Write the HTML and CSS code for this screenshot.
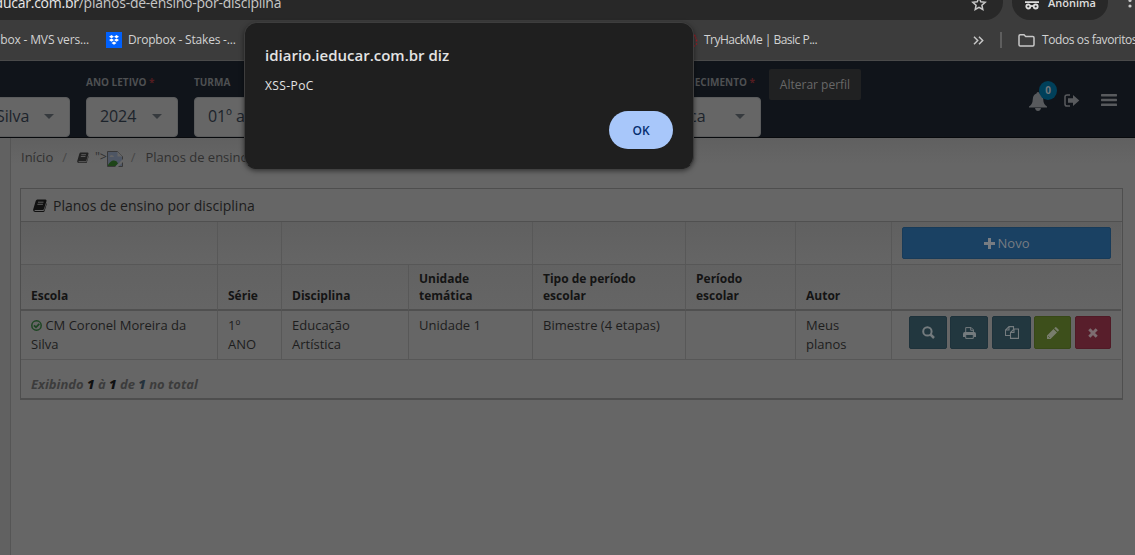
FILE: index.html
```html
<!DOCTYPE html>
<html lang="pt-BR">
<head>
<meta charset="utf-8">
<title>Planos de ensino por disciplina</title>
<link rel="stylesheet" href="styles.css">
</head>
<body>
<div class="toolbar">
  <div class="omnibox"><span class="url"><b class="host">educar.com.br</b>/planos-de-ensino-por-disciplina</span>
    <svg class="star" width="16" height="16" viewBox="0 0 16 16" fill="none" stroke="#c7c7c7" stroke-width="1.5"><path d="M8 1.700l1.800 4 4.400.5-3.300 3 .9 4.300L8 11.300l-3.800 2.200.9-4.300-3.300-3 4.400-.5z"/></svg>
  </div>
  <div class="incognito">
    <svg width="16" height="16" viewBox="0 0 16 16" fill="none" stroke="#dedede" stroke-width="1.800"><path d="M1 8.200h14M4 5V2h8v3"/><circle cx="4.300" cy="12.500" r="2"/><circle cx="11.700" cy="12.500" r="2"/><path d="M6 12h4"/></svg>
    <span>Anônima</span>
  </div>
  <svg class="dots" width="4" height="18" viewBox="0 0 4 18" fill="#c7c7c7"><circle cx="2" cy="5" r="1.600"/><circle cx="2" cy="10.500" r="1.600"/><circle cx="2" cy="16" r="1.600"/></svg>
</div>

<div class="bookmarks">
  <span class="bm bm-mvs">pbox - MVS vers...</span>
  <svg class="dropbox" width="16" height="16" viewBox="0 0 16 16"><path fill="#0061fe" d="M0 0h16v16H0z"/><path fill="#fff" d="M5.500 3L8 4.700 5.500 6.300 3 4.700zM10.500 3L13 4.700l-2.500 1.600L8 4.700zM5.500 6.500L8 8.100 5.500 9.800 3 8.100zM10.500 6.500L13 8.100l-2.500 1.700L8 8.100zM8 9.500l2.500 1.600L8 12.800l-2.500-1.700z"/></svg>
  <span class="bm bm-stakes">Dropbox - Stakes -...</span>
  <svg class="thm" width="10" height="14" viewBox="0 0 10 14" fill="none" stroke="#9c1c24" stroke-width="1.600"><path d="M1 2.500c4-2 7 0 6.500 3M8.500 6.500v2M3 10l3 1M8 10.500l1 1M4 13h4" stroke-dasharray="3 1"/></svg>
  <span class="bm bm-thm">TryHackMe | Basic P...</span>
  <svg class="more" width="11" height="9" viewBox="0 0 11 9" fill="none" stroke="#c7c7c7" stroke-width="1.500"><path d="M1 .8l3.700 3.700L1 8.200M6 .8l3.700 3.700L6 8.200"/></svg>
  <i class="sep"></i>
  <svg class="folder" width="17" height="13" viewBox="0 0 17 13" fill="none" stroke="#c7c7c7" stroke-width="1.500"><path d="M1 2q0-1.200 1.200-1.200H6l1.700 1.700h7.100q1.200 0 1.200 1.200v7q0 1.200-1.200 1.200H2.200Q1 11.900 1 10.700z"/></svg>
  <span class="bm bm-all">Todos os favoritos</span>
</div>

<header class="navbar">
  <div class="field f-escola"><label>&nbsp;</label><div class="select"><span>Silva</span><i class="caret"></i></div></div>
  <div class="field f-ano"><label>ANO LETIVO <em>*</em></label><div class="select"><span>2024</span><i class="caret"></i></div></div>
  <div class="field f-turma"><label>TURMA</label><div class="select"><span>01º ano</span><i class="caret"></i></div></div>
  <div class="field f-area"><label>CONHECIMENTO <em>*</em></label><div class="select"><span>Artística</span><i class="caret"></i></div></div>
  <button class="profile">Alterar perfil</button>
  <div class="tools">
    <div class="bell">
      <svg width="18" height="19" viewBox="0 0 18 19" fill="#585a5d"><path d="M9 0q1.500 0 1.500 1.600Q14 2.700 14.200 7q.2 5.500 3.800 7.500v1H0v-1Q3.600 12.500 3.800 7 4 2.700 7.500 1.600 7.500 0 9 0zM6 16h6q-.5 3-3 3t-3-3z"/></svg>
      <span class="badge">0</span>
    </div>
    <svg class="logout" width="16" height="13" viewBox="0 0 16 13"><path fill="none" stroke="#585a5d" stroke-width="1.500" d="M6 .9H3.200Q1 .9 1 3v7q0 2.100 2.200 2.100H6"/><path fill="#585a5d" d="M4 4.300h5V1l6.300 5.500L9 12V8.700H4z"/></svg>
    <svg class="menu" width="16" height="12" viewBox="0 0 16 12" fill="#585a5d"><rect width="16" height="2.400" rx=".6"/><rect y="4.800" width="16" height="2.400" rx=".6"/><rect y="9.600" width="16" height="2.400" rx=".6"/></svg>
  </div>
</header>

<main class="page">
  <nav class="crumbs">
    <span>Início</span><span class="slash">/</span>
    <svg class="book" width="12" height="11" viewBox="0 0 14 13"><path fill="#222" d="M4.300.5h8.200q1.300.2 1 1.500L11 10q-.3 1-1.400 1H2.300q-.8 0-.8.500t.8.600H10q.9 0 1.200-.8L13.600 4q.4.300.2 1L11.600 12q-.3 1-1.400 1H2Q0 12.800.1 10.800L2.700 2Q3.200.5 4.300.5z"/><path stroke="#666" d="M5 3.200h5.500M4.400 5.300h5.500"/></svg>
    <span class="inject">"&gt;</span>
    <svg class="broken" width="16" height="16" viewBox="0 0 16 16"><path fill="#4e5664" stroke="#383838" d="M.5.500h10l5 5v10H.5z"/><path fill="#646464" d="M10.500.500v5h5zM2.500 6q.3-2 2.300-2 2.200.3 2.200 2z"/><path fill="#1e4418" d="M1 14q3-5 6-4.500 3 .2 4 3L8.500 15H1z"/><path fill="#666" d="M16 8v3l-5 5H8z"/></svg>
    <span class="slash s2">/</span><span>Planos de ensino por disciplina</span>
  </nav>

  <section class="card">
    <h1><svg width="14" height="13" viewBox="0 0 14 13"><path fill="#111" d="M4.300.5h8.200q1.300.2 1 1.500L11 10q-.3 1-1.400 1H2.300q-.8 0-.8.500t.8.600H10q.9 0 1.200-.8L13.600 4q.4.300.2 1L11.600 12q-.3 1-1.400 1H2Q0 12.800.1 10.800L2.700 2Q3.200.5 4.300.5z"/><path stroke="#666" stroke-width=".9" d="M5 3.200h5.500M4.400 5.300h5.500"/></svg>Planos de ensino por disciplina</h1>
    <table>
      <colgroup><col class="c1"><col class="c2"><col class="c3"><col class="c4"><col class="c5"><col class="c6"><col class="c7"><col class="c8"></colgroup>
      <thead>
        <tr class="filters"><th></th><th></th><th colspan="2"></th><th></th><th></th><th></th>
          <th><button class="novo"><svg width="11" height="11" viewBox="0 0 11 11" fill="#777c82"><path d="M4 0h3v4h4v3H7v4H4V7H0V4h4z"/></svg>Novo</button></th></tr>
        <tr class="heads"><th>Escola</th><th>Série</th><th>Disciplina</th><th>Unidade temática</th><th>Tipo de período escolar</th><th>Período escolar</th><th>Autor</th><th></th></tr>
      </thead>
      <tbody>
        <tr>
          <td><svg class="ok" width="11" height="11" viewBox="0 0 11 11" fill="none" stroke="#1d4522" stroke-width="1.500"><circle cx="5.500" cy="5.500" r="4.700"/><path stroke-width="1.800" d="M3 5.300l2 2 3.300-3.400"/></svg> CM Coronel Moreira da Silva</td>
          <td>1º ANO</td><td>Educação Artística</td><td>Unidade 1</td><td>Bimestre (4 etapas)</td><td></td><td>Meus planos</td>
          <td class="actions"><div>
            <button class="b-view"><svg width="13" height="13" viewBox="0 0 13 13" fill="none" stroke="#747b7e" stroke-width="2"><circle cx="5.400" cy="5.400" r="4.200"/><path stroke-width="2.500" d="M8.500 8.500l3.500 3.500"/></svg></button>
            <button class="b-print"><svg width="13" height="12" viewBox="0 0 13 12"><path fill="#747b7e" d="M0 7q0-2 1.700-2h9.600Q13 5 13 7v3h-2.500V8h-8v2H0z"/><path fill="none" stroke="#747b7e" d="M2.700 5V.6h5.500l2.200 2.200V5M7.700.6v2.700h2.700M2.700 8v3.400h7.600V8"/></svg></button>
            <button class="b-copy"><svg width="14" height="13" viewBox="0 0 14 13" fill="none" stroke="#747b7e" stroke-width="1.100"><path d="M5.500 9.500h-5V4L4 .6h4.500V3M4 .6V4H.5M5.500 6.500L9 3h4.500v9.400h-8zM9 3v3.500H5.500"/></svg></button>
            <button class="b-edit"><svg width="12" height="12" viewBox="0 0 12 12"><path fill="#787d6c" d="M0 12V8.500L6.500 2 10 5.500 3.500 12zM7.200 1.300L8 .5q.7-.8 1.500 0l2 2q.8.8 0 1.500l-.8.800z"/><path stroke="#3b4c1c" stroke-width=".8" d="M1.300 9.300l1.400 1.400"/></svg></button>
            <button class="b-del"><svg width="10" height="10" viewBox="0 0 10 10" stroke="#7d6c70" stroke-width="3"><path d="M1.300 1.300l7.400 7.400M8.700 1.300L1.300 8.700"/></svg></button>
          </div></td>
        </tr>
      </tbody>
    </table>
    <footer>Exibindo <b>1</b> à <b>1</b> de <b class="total">1</b> no total</footer>
  </section>
</main>

<div class="dialog">
  <h2>idiario.ieducar.com.br diz</h2>
  <p>XSS-PoC</p>
  <button>OK</button>
</div>
</body>
</html>
```
FILE: styles.css
```css
* { box-sizing: border-box; }
body { margin: 0; width: 1135px; height: 555px; overflow: hidden; position: relative; display: flex; flex-direction: column; background: #666; font-family: "Open Sans", sans-serif; color: #141414; }
button { font-family: inherit; border: 0; padding: 0; display: flex; align-items: center; justify-content: center; }
svg { flex: none; display: block; }

/* browser chrome */
.toolbar { height: 20px; background: #3c3c3c; display: flex; flex: none; }
.omnibox { width: 1003px; height: 20px; background: #282828; border-bottom-right-radius: 18px; display: flex; justify-content: space-between; padding-right: 16px; color: #c7c7c7; font-size: 14px; line-height: 20px; }
.url { margin: -7px 0 0 -13px; white-space: nowrap; letter-spacing: -.25px; }
.host { font-weight: 400; color: #e8e8e8; }
.star { margin-top: -4px; }
.incognito { margin-left: 9px; width: 96px; height: 20px; border-radius: 0 0 18px 18px; background: #282828; display: flex; padding-left: 12px; gap: 8px; color: #dedede; font: 600 11px/16px "Open Sans", sans-serif; }
.incognito svg { margin-top: -6px; }
.incognito span { margin-top: -5px; }
.dots { margin: -10px 0 0 20px; }
.bookmarks { height: 41px; flex: none; background: #3c3c3c; border-bottom: 1px solid #4a4a4a; display: flex; align-items: center; white-space: nowrap; color: #d2d2d2; font-size: 12px; line-height: 16px; }
.bm { flex: none; margin-top: -1px; }
.bm-mvs { width: 113px; margin-left: -7px; letter-spacing: -.15px; }
.bm-stakes { margin-left: 6px; width: 561px; letter-spacing: -.2px; }
.thm { margin-left: -1px; }
.bm-thm { margin-left: 6px; width: 269px; letter-spacing: -.5px; }
.sep { flex: none; width: 2px; height: 16px; background: #5e5e5e; margin: 0 16px 0 16px; }
.bm-all { margin-left: 7px; letter-spacing: -.4px; }

/* application bar */
.navbar { height: 77px; flex: none; background: #10141a; border-bottom: 1px solid #080a0d; display: flex; padding-top: 8px; }
.field { margin-right: 16px; flex: none; }
.field label { display: block; height: 28px; line-height: 27px; font-size: 10px; font-weight: 700; color: #4e5052; white-space: nowrap; }
.field em { color: #541c20; font-style: normal; }
.select { height: 40px; border-radius: 4px; background: #666; border: 1px solid #5b5c5d; display: flex; justify-content: space-between; align-items: center; padding: 0 15px 2px 13px; font-size: 16px; letter-spacing: -.1px; color: #1c232b; }
.caret { border: 5px solid transparent; border-top-color: #363a3e; border-bottom: 0; }
.f-escola { width: 86px; margin-left: -16px; }
.f-escola .select { padding-left: 11px; }
.f-ano { width: 92px; }
.f-turma { width: 160px; }
.f-area { width: 120px; margin-left: 271px; margin-right: 8px; }
.f-area label { text-align: right; padding-right: 6px; }
.f-area .select span { margin-left: -9px; }
.profile { width: 92px; height: 31px; background: #202122; color: #686868; font-size: 12px; border-radius: 2px; }
.tools { display: flex; margin-left: 168px; }
.bell { position: relative; width: 18px; margin-top: 23px; }
.badge { position: absolute; left: 10px; top: -11px; width: 18px; height: 19px; border-radius: 50%; background: #00405a; color: #72777b; font: 700 10px/19px "Open Sans", sans-serif; text-align: center; }
.logout { margin: 25px 0 0 17px; }
.menu { margin: 25px 0 0 21px; }

/* page */
.page { flex: 1; margin-left: 10px; border-left: 1px solid #555; padding: 0 12px 0 9px; background: linear-gradient(#606060, #666 26px); box-shadow: -10px 0 0 #616161; }
.crumbs { height: 50px; padding: 9px 0 0 1px; display: flex; font-size: 13px; line-height: 20px; color: #303030; white-space: nowrap; }
.slash { color: #474747; margin: 0 10px 0 9px; }
.book { margin: 5px 0 0; }
.inject { margin-left: 6px; font-size: 12.5px; letter-spacing: -.2px; }
.broken { margin-top: 4px; }
.s2 { margin-left: 8px; }
.card { border: 1px solid #4e4e4e; border-bottom-width: 2px; height: 212px; width: 1103px; }
.card h1 { margin: 0; height: 33px; border-bottom: 1px solid #505050; padding-left: 12px; display: flex; align-items: center; gap: 6px; font-size: 14px; font-weight: 400; color: #1c1c1c; }
table { table-layout: fixed; width: 1100px; border-collapse: separate; border-spacing: 0; font-size: 13px; line-height: 19px; }
.c1 { width: 197px; } .c2 { width: 64px; } .c3 { width: 127px; } .c4 { width: 124px; }
.c5 { width: 153px; } .c6 { width: 110px; } .c7 { width: 96px; } .c8 { width: 229px; }
th, td { border-right: 1px solid #585858; border-bottom: 1px solid #575757; padding: 0 10px; text-align: left; }
th:last-child, td:last-child { border-right: 0; }
.filters th { height: 43px; background: linear-gradient(#606060, #656565); }
.novo { width: 209px; height: 32px; background: #1a4163; border: 1px solid #183b59; border-radius: 2px; color: #777c82; font-size: 13px; gap: 3px; }
.heads th { height: 46px; border-bottom: 2px solid #505050; vertical-align: bottom; padding-bottom: 5px; font-size: 12px; line-height: 17px; background: linear-gradient(#626262, #656565); }
td { height: 49px; vertical-align: top; padding-top: 5px; color: #1d1d1d; white-space: normal; }
.ok { display: inline-block; vertical-align: -1px; }
.actions div { display: flex; padding-left: 7px; }
.actions button { height: 33px; border-radius: 2px; border: 1px solid #1e323b; background: #22373f; }
.actions .b-view { width: 38px; margin-right: 3px; }
.actions .b-print { width: 38px; margin-right: 4px; }
.actions .b-copy { width: 39px; margin-right: 3px; }
.actions .b-edit { width: 37px; margin-right: 4px; background: #3d4f1b; border-color: #374817; }
.actions .b-del { width: 36px; background: #581e2b; border-color: #501a26; }
footer { height: 38px; padding: 12px 10px 0; font-size: 13px; line-height: 25px; font-weight: 700; font-style: italic; color: #3c3c3c; }
footer b { color: #111; }
footer .total { color: #24323c; }

/* alert */
.dialog { position: absolute; left: 244px; top: 22px; width: 450px; height: 147px; border-radius: 13px; background: #1f1f1f; border: 1px solid #3d3d3d; border-bottom-color: #1f1f1f; box-shadow: 0 2px 5px rgba(0,0,0,.5); padding: 21px 20px; display: flex; flex-direction: column; color: #e3e3e3; }
.dialog h2 { margin: 0; font-size: 15px; line-height: 22px; font-weight: 600; }
.dialog p { margin: 10px 0 0; font-size: 12px; line-height: 20px; letter-spacing: .4px; }
.dialog button { align-self: flex-end; width: 64px; height: 38px; margin-top: 15px; border-radius: 19px; background: #a8c7fa; color: #062e6f; font-size: 12px; font-weight: 600; flex: none; }
```
